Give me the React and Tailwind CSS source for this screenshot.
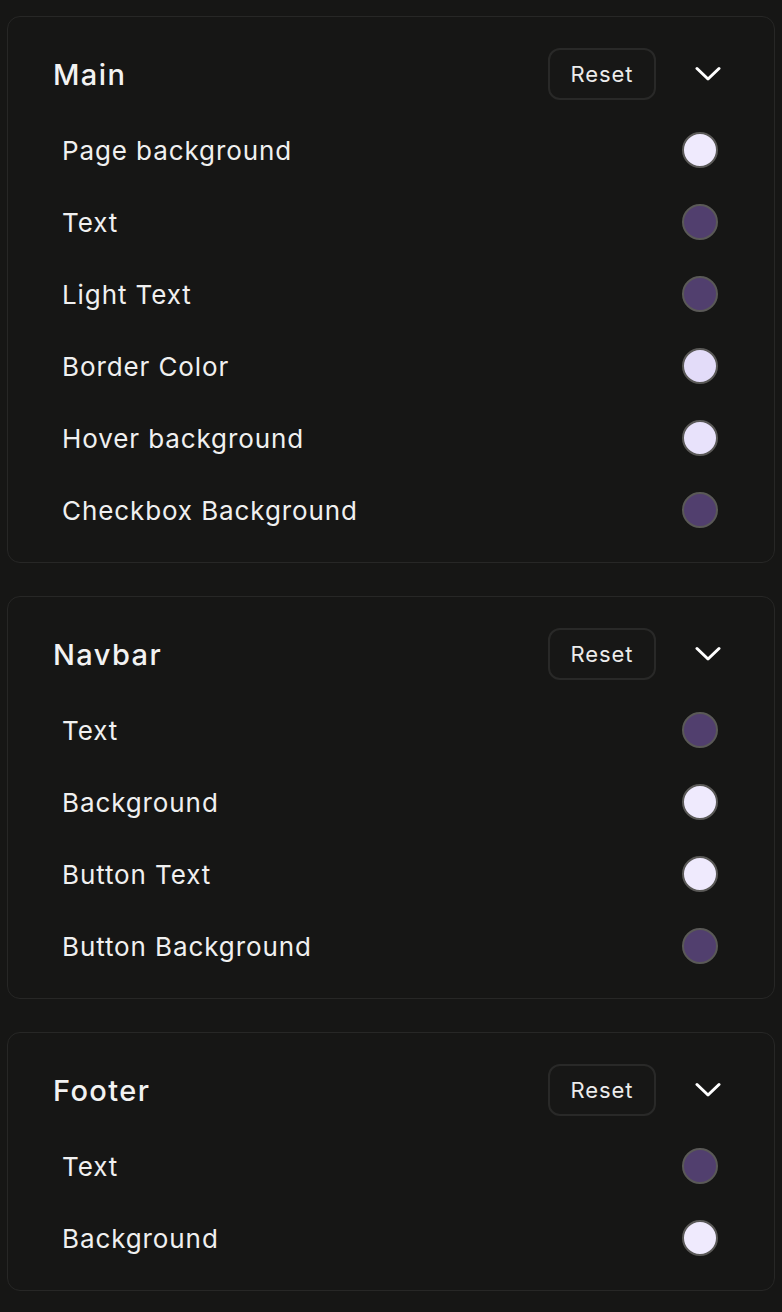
import React from "react";

const LIGHT = "#efeafd";
const DARK = "#513f6e";

const sections = [
  {
    title: "Main",
    rows: [
      ["Page background", LIGHT],
      ["Text", DARK],
      ["Light Text", DARK],
      ["Border Color", "#e3dcf9"],
      ["Hover background", "#e8e2fb"],
      ["Checkbox Background", DARK],
    ],
  },
  {
    title: "Navbar",
    rows: [
      ["Text", DARK],
      ["Background", LIGHT],
      ["Button Text", LIGHT],
      ["Button Background", DARK],
    ],
  },
  {
    title: "Footer",
    rows: [
      ["Text", DARK],
      ["Background", LIGHT],
    ],
  },
];

function Chevron() {
  return (
    <svg width="26" height="16" viewBox="0 0 26 16" fill="none">
      <path d="M2 2.5 L13 13 L24 2.5" stroke="#ffffff" strokeWidth="3" strokeLinecap="round" strokeLinejoin="round" />
    </svg>
  );
}

function Card({ title, rows }) {
  return (
    <div className="w-full rounded-[13px] border border-[#272726] bg-[#161615] pt-[31px] pb-[16px]">
      <div className="flex h-[52px] items-center pl-[45px] pr-[53px]">
        <div className="flex-1 text-[29px] font-medium tracking-[1.4px] text-[#f2f2f2] leading-none">{title}</div>
        <button className="flex h-[52px] w-[108px] items-center justify-center rounded-[12px] border-2 border-[#292928] bg-[#171716] text-[22px] tracking-[0.9px] text-[#ececec]">
          Reset
        </button>
        <div className="ml-[39px] flex w-[26px] items-center justify-center">
          <Chevron />
        </div>
      </div>
      <div className="mt-[14px] flex flex-col">
        {rows.map(([label, color], i) => (
          <div key={i} className="flex h-[72px] items-center pl-[54px] pr-[56px]">
            <div className="flex-1 text-[26px] tracking-[0.9px] text-[#f0f0f0] leading-[36px] pt-[1px]">{label}</div>
            <div
              className="h-[36px] w-[36px] rounded-full border-2 border-[#5a5957]"
              style={{ backgroundColor: color }}
            />
          </div>
        ))}
      </div>
    </div>
  );
}

export default function App() {
  return (
    <div
      className="min-h-[1312px] w-[782px] bg-[#161615] px-[7px] pt-[16px] flex flex-col gap-[33px]"
      style={{ fontFamily: "Inter, 'Noto Sans', sans-serif" }}
    >
      {sections.map((s) => (
        <Card key={s.title} title={s.title} rows={s.rows} />
      ))}
    </div>
  );
}
